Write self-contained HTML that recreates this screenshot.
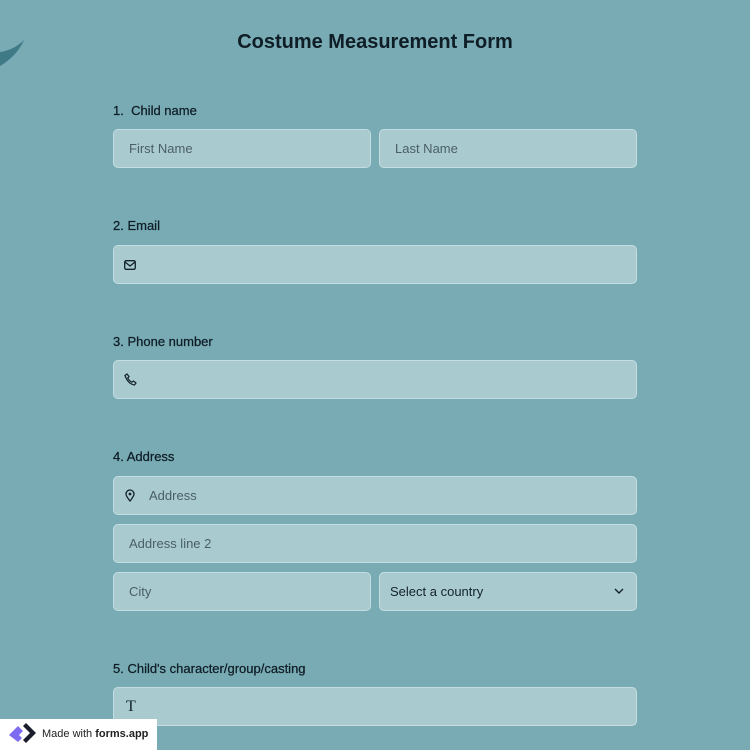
<!DOCTYPE html>
<html><head><style>
body{margin:0;width:750px;height:750px;background:#78abb4;font-family:"Liberation Sans",sans-serif;position:relative;overflow:hidden;color:#1b2a33}
.t{position:absolute;left:0;width:750px;top:31px;text-align:center;font-size:20px;font-weight:bold;color:#0f1d26}
.l{position:absolute;left:113px;font-size:13px;color:#0f1d26;-webkit-text-stroke:0.25px #0f1d26}
.i{position:absolute;background:#a9cacf;border:1px solid #c4dde1;border-radius:5px;box-sizing:border-box;height:39px;font-size:13px;color:#4a5f66;line-height:37px;padding-left:15px}
.w{left:113px;width:524px}
.a{left:113px;width:258px}.b{left:379px;width:258px}
svg{position:absolute}
</style></head><body>
<svg style="left:0;top:38px" width="26" height="30" viewBox="0 38 26 30"><path d="M0 52 Q14 50 24 40 Q17 56 0 66Z" fill="#3f7a86"/></svg>
<div class="t">Costume Measurement Form</div>
<div class="l" style="top:103px">1.&nbsp; Child name</div>
<div class="i a" style="top:129px">First Name</div>
<div class="i b" style="top:129px">Last Name</div>
<div class="l" style="top:218px">2. Email</div>
<div class="i w" style="top:245px"><svg style="left:10px;top:14px" width="12" height="10"><rect x="0.7" y="0.7" width="10.6" height="8.6" rx="1.5" fill="none" stroke="#13222b" stroke-width="1.3"/><path d="M1 2l5 4 5-4" fill="none" stroke="#13222b" stroke-width="1.3"/></svg></div>
<div class="l" style="top:334px">3. Phone number</div>
<div class="i w" style="top:360px"><svg style="left:10px;top:12px" width="13" height="13" viewBox="0 0 13 13"><path d="M3 1l2 2.5-1.2 1.5q1.5 3 4.2 4.2l1.5-1.2 2.5 2-1.5 2Q4 11 1 2.5Z" fill="none" stroke="#13222b" stroke-width="1.2"/></svg></div>
<div class="l" style="top:449px">4. Address</div>
<div class="i w" style="top:476px;padding-left:35px"><svg style="left:11px;top:12px" width="10" height="13" viewBox="0 0 10 13"><path d="M5 12Q1 7 1 5a4 4 0 0 1 8 0q0 2-4 7Z" fill="none" stroke="#13222b" stroke-width="1.3"/><circle cx="5" cy="5" r="1.4" fill="#13222b"/></svg>Address</div>
<div class="i w" style="top:524px">Address line 2</div>
<div class="i a" style="top:572px">City</div>
<div class="i b" style="top:572px;padding-left:10px;color:#13222b">Select a country<svg style="right:12px;top:15px" width="10" height="7"><path d="M1 1l4 4 4-4" fill="none" stroke="#13222b" stroke-width="1.4"/></svg></div>
<div class="l" style="top:661px">5. Child's character/group/casting</div>
<div class="i w" style="top:687px;font-family:'Liberation Serif',serif;font-size:16px;color:#13222b;padding-left:12px">T</div>
<div style="position:absolute;left:0;top:719px;width:157px;height:31px;background:#fff;font-size:11px;line-height:31px;color:#222">
<svg style="left:7px;top:3px" width="30" height="25" viewBox="0 0 30 25"><path d="M2 13L11 4l5 5-4 4 3 3-4 4Z" fill="#7d6cf0"/><path d="M16 4l3-3 10 10-10 10-3-3 7-7Z" fill="#1c1d2c"/></svg>
<span style="position:absolute;left:42px">Made with <b>forms.app</b></span></div>
</body></html>
